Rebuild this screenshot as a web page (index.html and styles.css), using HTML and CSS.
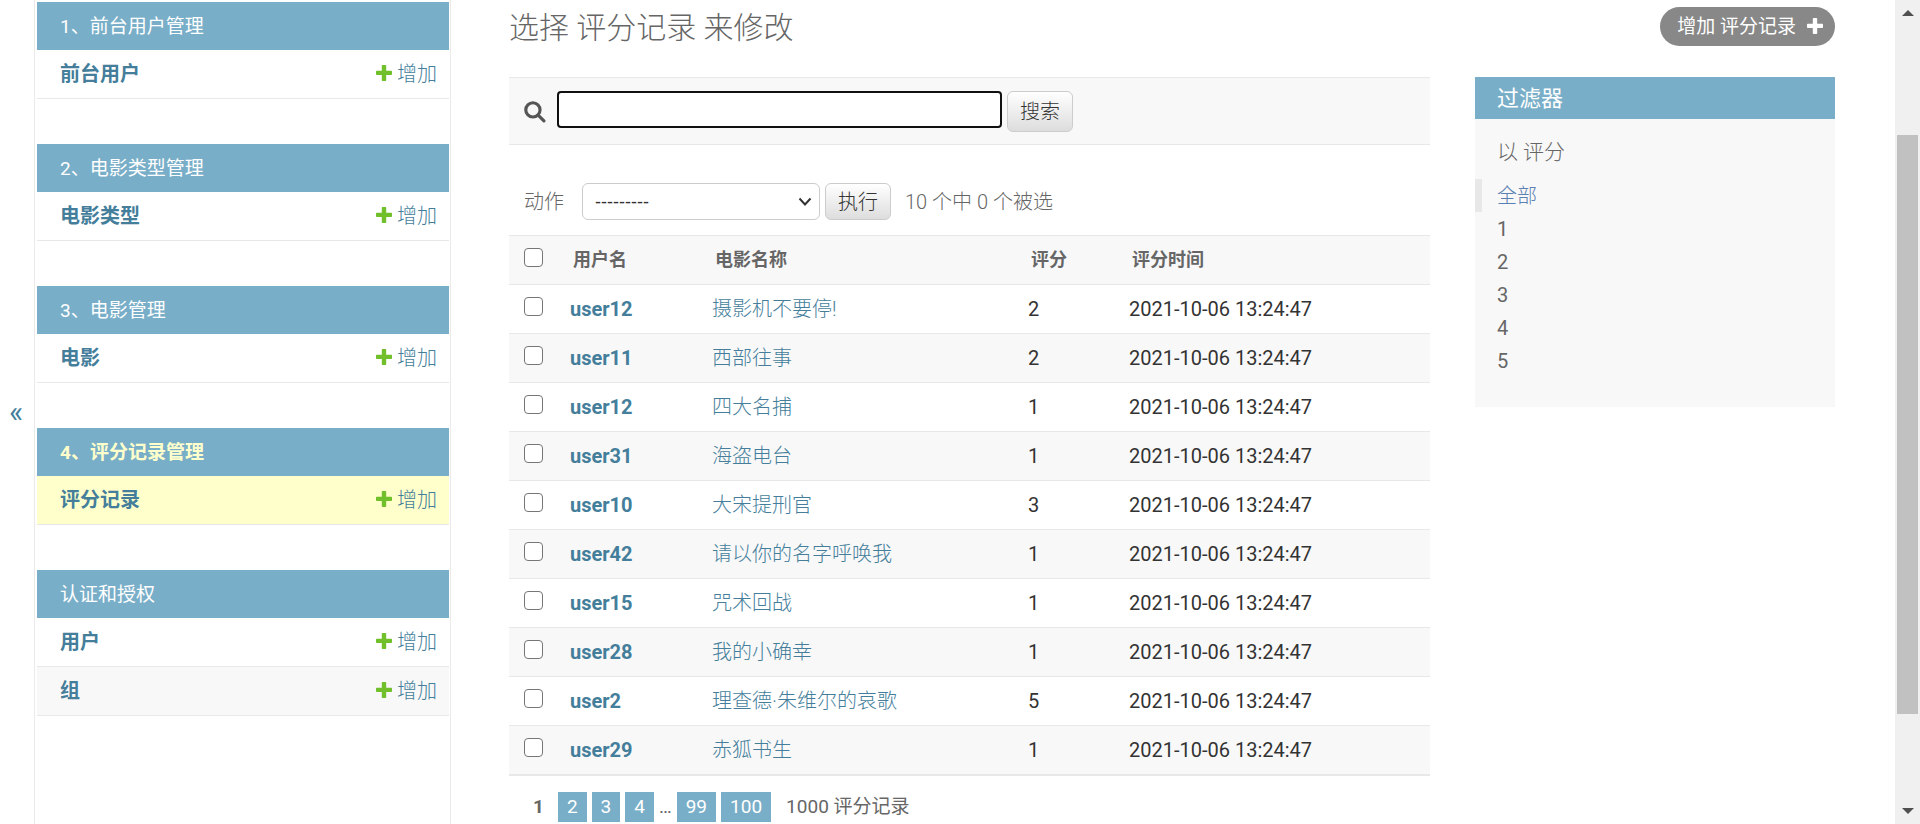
FILE: index.html
```html
<!DOCTYPE html>
<html lang="zh-CN">
<head>
<meta charset="utf-8">
<title>选择 评分记录 来修改</title>
<link rel="stylesheet" href="styles.css">
</head>
<body>
<svg class="defs" width="0" height="0" aria-hidden="true">
  <symbol id="plus" viewBox="0 0 16 16"><path d="M6.6 0h2.8q.8 0 .8.8v5h5q.8 0 .8.8v2.6q0 .8-.8.8h-5v5.2q0 .8-.8.8H6.600q-.8 0-.8-.8V10h-5Q0 10 0 9.200V6.600q0-.8.8-.8h5v-5Q5.800 0 6.600 0z"/></symbol>
</svg>
<div class="page">
  <button class="toggle" type="button" aria-label="切换导航">«</button>
  <nav class="sidebar">
    <section class="module">
      <h2><a href="#">1、前台用户管理</a></h2>
      <div class="model"><a class="name" href="#">前台用户</a><a class="add" href="#"><svg class="plus"><use href="#plus"/></svg>增加</a></div>
    </section>
    <section class="module">
      <h2><a href="#">2、电影类型管理</a></h2>
      <div class="model"><a class="name" href="#">电影类型</a><a class="add" href="#"><svg class="plus"><use href="#plus"/></svg>增加</a></div>
    </section>
    <section class="module">
      <h2><a href="#">3、电影管理</a></h2>
      <div class="model"><a class="name" href="#">电影</a><a class="add" href="#"><svg class="plus"><use href="#plus"/></svg>增加</a></div>
    </section>
    <section class="module current">
      <h2><a href="#">4、评分记录管理</a></h2>
      <div class="model"><a class="name" href="#">评分记录</a><a class="add" href="#"><svg class="plus"><use href="#plus"/></svg>增加</a></div>
    </section>
    <section class="module">
      <h2><a href="#">认证和授权</a></h2>
      <div class="model"><a class="name" href="#">用户</a><a class="add" href="#"><svg class="plus"><use href="#plus"/></svg>增加</a></div>
      <div class="model alt"><a class="name" href="#">组</a><a class="add" href="#"><svg class="plus"><use href="#plus"/></svg>增加</a></div>
    </section>
  </nav>
  <main class="content">
    <header class="heading">
      <h1>选择 评分记录 来修改</h1>
      <a class="addlink" href="#">增加 评分记录<svg class="plus"><use href="#plus"/></svg></a>
    </header>
    <div class="columns">
      <div class="changelist">
        <form class="search">
          <label for="q"><svg class="lens" viewBox="0 0 21 21" role="img" aria-label="搜索"><circle cx="8.500" cy="8.500" r="6.800"/><path d="M13.500 13.500l5.500 5.500"/></svg></label>
          <input id="q" type="text">
          <button class="btn tall" type="submit">搜索</button>
        </form>
        <form class="actions">
          <label for="action">动作</label>
          <div class="select">
            <select id="action"><option>---------</option></select>
            <svg class="chevron" viewBox="0 0 14 10"><path d="M1.500 1.500L7 7.500l5.500-6"/></svg>
          </div>
          <button class="btn" type="button">执行</button>
          <span class="counter">10 个中 0 个被选</span>
        </form>
        <table class="results">
          <colgroup><col class="c-check"><col class="c-user"><col class="c-film"><col class="c-score"><col></colgroup>
          <thead><tr><th><input type="checkbox" aria-label="全选"></th><th>用户名</th><th>电影名称</th><th>评分</th><th>评分时间</th></tr></thead>
          <tbody>
            <tr><td><input type="checkbox" aria-label="选择"></td><th><a href="#">user12</a></th><td><a href="#">摄影机不要停!</a></td><td>2</td><td>2021-10-06 13:24:47</td></tr>
            <tr><td><input type="checkbox" aria-label="选择"></td><th><a href="#">user11</a></th><td><a href="#">西部往事</a></td><td>2</td><td>2021-10-06 13:24:47</td></tr>
            <tr><td><input type="checkbox" aria-label="选择"></td><th><a href="#">user12</a></th><td><a href="#">四大名捕</a></td><td>1</td><td>2021-10-06 13:24:47</td></tr>
            <tr><td><input type="checkbox" aria-label="选择"></td><th><a href="#">user31</a></th><td><a href="#">海盗电台</a></td><td>1</td><td>2021-10-06 13:24:47</td></tr>
            <tr><td><input type="checkbox" aria-label="选择"></td><th><a href="#">user10</a></th><td><a href="#">大宋提刑官</a></td><td>3</td><td>2021-10-06 13:24:47</td></tr>
            <tr><td><input type="checkbox" aria-label="选择"></td><th><a href="#">user42</a></th><td><a href="#">请以你的名字呼唤我</a></td><td>1</td><td>2021-10-06 13:24:47</td></tr>
            <tr><td><input type="checkbox" aria-label="选择"></td><th><a href="#">user15</a></th><td><a href="#">咒术回战</a></td><td>1</td><td>2021-10-06 13:24:47</td></tr>
            <tr><td><input type="checkbox" aria-label="选择"></td><th><a href="#">user28</a></th><td><a href="#">我的小确幸</a></td><td>1</td><td>2021-10-06 13:24:47</td></tr>
            <tr><td><input type="checkbox" aria-label="选择"></td><th><a href="#">user2</a></th><td><a href="#">理查德·朱维尔的哀歌</a></td><td>5</td><td>2021-10-06 13:24:47</td></tr>
            <tr><td><input type="checkbox" aria-label="选择"></td><th><a href="#">user29</a></th><td><a href="#">赤狐书生</a></td><td>1</td><td>2021-10-06 13:24:47</td></tr>
          </tbody>
        </table>
        <div class="paginator">
          <span class="this">1</span><a href="#">2</a><a href="#">3</a><a href="#">4</a><span>…</span><a href="#">99</a><a href="#">100</a><span class="total">1000 评分记录</span>
        </div>
      </div>
      <aside class="filter">
        <h2>过滤器</h2>
        <h3>以 评分</h3>
        <ul>
          <li class="selected"><a href="#">全部</a></li>
          <li><a href="#">1</a></li>
          <li><a href="#">2</a></li>
          <li><a href="#">3</a></li>
          <li><a href="#">4</a></li>
          <li><a href="#">5</a></li>
        </ul>
      </aside>
    </div>
  </main>
  <div class="scrollbar" aria-hidden="true">
    <svg viewBox="0 0 12 6"><path d="M6 0l6 6H0z"/></svg>
    <div class="track"><div class="thumb"></div></div>
    <svg viewBox="0 0 12 6"><path d="M0 0h12L6 6z"/></svg>
  </div>
</div>
</body>
</html>
```
FILE: styles.css
```css
* { box-sizing: border-box; }

body {
  margin: 0;
  background: #fff;
  color: #666;
  font: 400 20px/24px Roboto, "Noto Sans CJK SC", sans-serif;
}

h1, h2, h3, ul { margin: 0; padding: 0; font-weight: 400; }
ul { list-style: none; }
a { color: #447e9b; text-decoration: none; }
button, input, select { font: inherit; }
.defs { position: absolute; }

.page { display: flex; height: 100vh; overflow: hidden; }

.toggle {
  flex: none;
  width: 35px;
  padding: 0 2px 0 0;
  border: 0;
  border-right: 1px solid #eaeaea;
  background: #fff;
  color: #447e9b;
  font-size: 30px;
}

/* Navigation */
.sidebar {
  flex: none;
  width: 416px;
  padding: 2px 1px 0 2px;
  border-right: 1px solid #eaeaea;
}
.module { margin-bottom: 45px; }
.module h2 {
  padding: 13px 23px 11px;
  background: #79aec8;
  font-size: 19px;
}
.module h2 a { color: #fff; }
.model {
  display: flex;
  justify-content: space-between;
  padding: 12px 12px 12px 23px;
  border-bottom: 1px solid #e8e8e8;
}
.name { font-weight: 700; }
.add { display: flex; align-items: center; gap: 5px; font-weight: 300; }
.add .plus { fill: #70bf2b; margin-bottom: 3px; }
.plus { width: 16px; height: 16px; }
.alt { background: #f8f8f8; }
.current h2 a { color: #ffc; font-weight: 700; }
.current .model { background: #ffc; }

/* Main column */
.content { flex: 1; min-width: 0; padding: 7px 60px 0 58px; }
.heading {
  display: flex;
  align-items: flex-start;
  justify-content: space-between;
  margin-bottom: 29px;
}
.heading h1 { font-size: 30px; line-height: 41px; font-weight: 300; }
.addlink {
  display: flex;
  align-items: center;
  gap: 11px;
  padding: 0 12px 0 17px;
  border-radius: 20px;
  background: #888;
  color: #fff;
  font-size: 19px;
  line-height: 39px;
}
.addlink .plus { fill: #fff; margin-bottom: 2px; }
.columns { display: flex; align-items: flex-start; gap: 45px; }
.changelist { flex: 1; min-width: 0; }

.search {
  display: flex;
  align-items: flex-start;
  padding: 13px 15px 12px;
  border: solid #e8e8e8;
  border-width: 1px 0;
  background: #f8f8f8;
}
.search label { padding: 10px 11px 0 0; }
.lens {
  display: block;
  width: 22px;
  height: 22px;
  fill: none;
  stroke: #555;
  stroke-width: 3;
  stroke-linecap: round;
}
.search input {
  width: 445px;
  height: 37px;
  margin-right: 5px;
  padding: 2px 8px;
  border: 2px solid #101010;
  border-radius: 4px;
  background: #fff;
  outline: 0;
}
.btn {
  height: 37px;
  padding: 0 12px;
  border: 1px solid #ccc;
  border-radius: 6px;
  background: linear-gradient(#fff, #ddd);
  color: #333;
  font-weight: 300;
}
.tall { height: 41px; }

.actions {
  display: flex;
  align-items: center;
  padding: 38px 15px 15px;
  font-weight: 300;
}
.actions label { margin-right: 18px; }
.select { position: relative; width: 238px; margin-right: 5px; }
.select select {
  display: block;
  width: 100%;
  height: 37px;
  padding: 0 12px;
  border: 1px solid #ccc;
  border-radius: 6px;
  background: #fff;
  color: #333;
  font: 18px "Liberation Sans", sans-serif;
  appearance: none;
}
.chevron {
  position: absolute;
  top: 14px;
  right: 8px;
  width: 14px;
  height: 10px;
  fill: none;
  stroke: #333;
  stroke-width: 2;
  pointer-events: none;
}
.counter { margin-left: 14px; }

.results {
  width: 100%;
  table-layout: fixed;
  border-spacing: 0;
  border-top: 1px solid #e8e8e8;
  border-bottom: 1px solid #e8e8e8;
}
.c-check { width: 49px; }
.c-user { width: 142px; }
.c-film { width: 316px; }
.c-score { width: 101px; }
.results td, .results th {
  height: 49px;
  padding: 0 12px;
  border-bottom: 1px solid #e8e8e8;
  text-align: left;
}
.results td { color: #333; }
.results td a { font-weight: 300; }
.results thead th { padding-left: 15px; background: #f8f8f8; font-size: 18px; }
.results tbody tr:nth-child(even) { background: #f8f8f8; }
.results input {
  display: block;
  width: 19px;
  height: 19px;
  margin: 0 0 6px 3px;
  border: 1px solid #767676;
  border-radius: 4px;
  background: #fff;
  appearance: none;
}
.results thead input { margin-left: 0; }

.paginator {
  display: flex;
  gap: 5px;
  padding: 16px 15px;
  font-size: 19px;
  line-height: 30px;
}
.paginator a { padding: 0 9px; background: #79aec8; color: #fff; }
.this { padding: 0 9px; font-weight: 700; }
.total { margin-left: 10px; }

/* Filter panel */
.filter { flex: none; width: 360px; padding-bottom: 30px; background: #f8f8f8; }
.filter h2 {
  padding: 10px 22px 8px;
  background: #79aec8;
  color: #fff;
  font-size: 22px;
}
.filter h3 { padding: 21px 22px 15px; font-size: 21px; font-weight: 300; }
.filter li { padding: 1px 15px 0; border-left: 7px solid transparent; line-height: 32px; }
.filter li a { color: #666; }
.filter .selected { border-color: #e8e8e8; }
.filter .selected a { color: #5b80b2; font-weight: 300; }

/* Scroll rail */
.scrollbar {
  display: flex;
  flex: none;
  flex-direction: column;
  align-items: center;
  width: 25px;
  padding: 10px 0;
  background: #f0f0f0;
}
.scrollbar svg { flex: none; width: 12px; height: 6px; fill: #505050; }
.track { flex: 1; width: 21px; margin: 10px 0; }
.thumb { height: 75%; margin-top: 109px; background: #c1c1c1; }
```
